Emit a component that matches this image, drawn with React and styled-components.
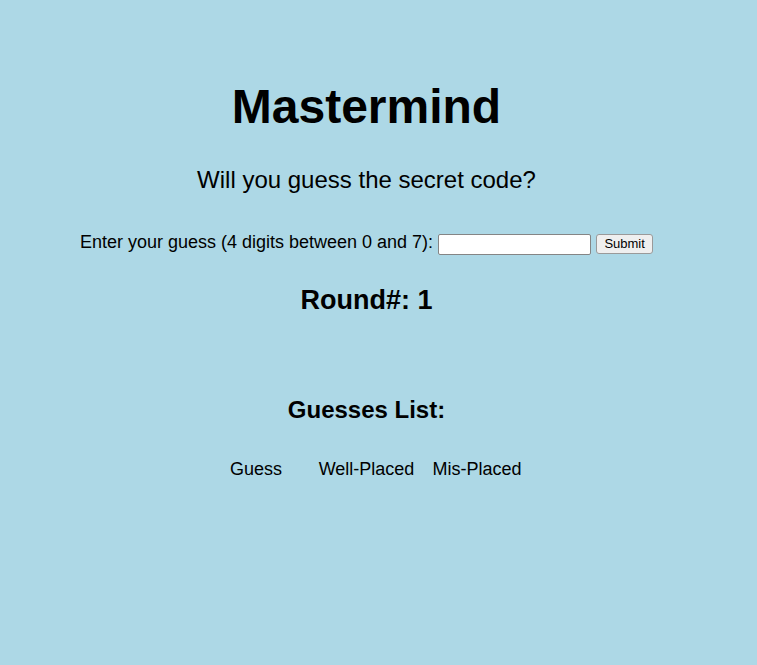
import styled, { createGlobalStyle } from "styled-components";

const GlobalStyle = createGlobalStyle`
  html, body {
    margin: 0;
    padding: 0;
    background-color: #add8e6;
  }
  body {
    font-family: "Liberation Sans", Arial, Helvetica, sans-serif;
    color: #000;
  }
`;

const Page = styled.div`
  width: 733px;
  min-height: 665px;
  display: flex;
  flex-direction: column;
  align-items: center;
  padding-top: 79px;
  box-sizing: border-box;
`;

const Title = styled.h1`
  margin: 0;
  font-size: 48px;
  font-weight: bold;
  line-height: normal;
`;

const Subtitle = styled.p`
  margin: 32px 0 0;
  font-size: 24px;
  line-height: normal;
`;

const GuessForm = styled.form`
  margin-top: 38px;
  display: flex;
  align-items: flex-start;
  gap: 5px;
`;

const Label = styled.label`
  font-size: 18px;
  line-height: 20px;
`;

const Input = styled.input`
  margin: 2px 0 0;
  width: 153px;
  height: 21px;
  box-sizing: border-box;
  border: 1px solid #858585;
  border-radius: 2px;
  background: #fff;
  padding: 1px 3px;
  font-family: "Liberation Sans", Arial, sans-serif;
  font-size: 13px;
  outline: none;
`;

const SubmitButton = styled.button`
  margin: 2px 0 0;
  width: 57px;
  height: 20px;
  box-sizing: border-box;
  padding: 0;
  border: 1px solid #9a9a9a;
  border-radius: 3px;
  background: #efefef;
  color: #000;
  font-family: "Liberation Sans", Arial, sans-serif;
  font-size: 13px;
  line-height: 18px;
  cursor: pointer;
`;

const Round = styled.h2`
  margin: 30px 0 0;
  font-size: 27px;
  font-weight: bold;
  line-height: normal;
`;

const ListTitle = styled.h3`
  margin: 80px 0 0;
  font-size: 24px;
  font-weight: bold;
  line-height: normal;
`;

const GuessTable = styled.div`
  margin-top: 35px;
  display: grid;
  grid-template-columns: repeat(3, 110.5px);
`;

const HeadCell = styled.div`
  font-size: 18px;
  line-height: normal;
  text-align: center;
`;

export default function App() {
  const round = 1;
  const guesses = [];

  return (
    <>
      <GlobalStyle />
      <Page>
        <Title>Mastermind</Title>
        <Subtitle>Will you guess the secret code?</Subtitle>
        <GuessForm onSubmit={(e) => e.preventDefault()}>
          <Label htmlFor="guess">Enter your guess (4 digits between 0 and 7):</Label>
          <Input id="guess" type="text" />
          <SubmitButton type="submit">Submit</SubmitButton>
        </GuessForm>
        <Round>Round#: {round}</Round>
        <ListTitle>Guesses List:</ListTitle>
        <GuessTable>
          <HeadCell>Guess</HeadCell>
          <HeadCell>Well-Placed</HeadCell>
          <HeadCell>Mis-Placed</HeadCell>
          {guesses.map((g, i) => (
            <HeadCell key={i}>{g}</HeadCell>
          ))}
        </GuessTable>
      </Page>
    </>
  );
}
